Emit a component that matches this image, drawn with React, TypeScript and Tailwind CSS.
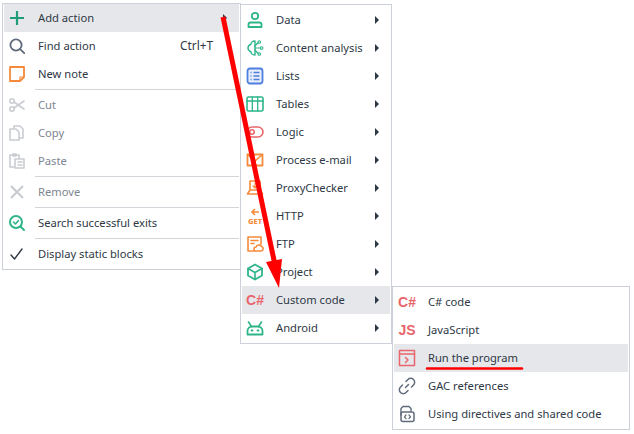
import React from 'react';

const STROKE = { fill: 'none', strokeWidth: 1.6, strokeLinecap: 'round', strokeLinejoin: 'round' } as const;

function Ic({ children }: { children: React.ReactNode }) {
  return (
    <svg width="18" height="18" viewBox="0 0 18 18" {...STROKE}>
      {children}
    </svg>
  );
}

const green = '#2fb58a';
const orange = '#f58a3c';
const red = '#e8666b';
const grey = '#5f6b7a';
const pale = '#c9ccd1';

const icons = {
  plus: <Ic><path d="M9 2v14M2 9h14" stroke="#1f9d78" strokeWidth="2.2" strokeLinecap="butt" /></Ic>,
  search: <Ic><circle cx="8" cy="8" r="5.6" stroke={grey} strokeWidth="1.8" /><path d="M12.2 12.2l4 4" stroke={grey} strokeWidth="1.8" /></Ic>,
  note: <Ic><path d="M2 2h14v10l-4 4H2z" stroke={orange} strokeWidth="1.8" /><path d="M12 16v-4h4" stroke={orange} strokeWidth="1.2" /></Ic>,
  cut: <Ic><circle cx="4" cy="5" r="2.2" stroke={pale} /><circle cx="4" cy="13" r="2.2" stroke={pale} /><path d="M6 6l10 7M6 12l10-7" stroke={pale} /></Ic>,
  copy: <Ic><path d="M6 4V2h6l3 3v9h-4" stroke={pale} /><path d="M2 5h6l3 3v8H2z" stroke={pale} /></Ic>,
  paste: <Ic><path d="M6 15H2V3h9v3" stroke={pale} /><path d="M5 2h3v2H5z" stroke={pale} /><path d="M7 7h9v9H7zM10 10h4M10 13h4" stroke={pale} /></Ic>,
  remove: <Ic><path d="M3 3l12 12M15 3L3 15" stroke={pale} strokeWidth="2.2" strokeLinecap="butt" /></Ic>,
  exits: <Ic><circle cx="8" cy="8" r="6" stroke={green} strokeWidth="2" /><path d="M5.5 8l2 2 3-3.5" stroke={green} /><path d="M12.5 12.5l3.5 3.5" stroke={green} strokeWidth="2" /></Ic>,
  check: <Ic><path d="M3 10l3.5 4L14 4" stroke="#333a44" strokeWidth="1.4" /></Ic>,
  data: <Ic><circle cx="9" cy="5" r="3.2" stroke={green} strokeWidth="1.8" /><path d="M2.5 16v-2.5c0-1.2 1-2 2-2h9c1 0 2 .8 2 2V16z" stroke={green} strokeWidth="1.8" /></Ic>,
  content: <Ic><path d="M9 2C6 2 5 4 5 5 3 6 2 8 2 9s1 3 3 4c0 1 1 3 4 3z" stroke={green} strokeWidth="1.4" /><path d="M9 7l3-3.500M9 9h5M9 11l3 3.500" stroke={green} strokeWidth="1.200" /><circle cx="13.300" cy="3" r="1.300" stroke={green} strokeWidth="1.100" /><circle cx="15.600" cy="9" r="1.300" stroke={green} strokeWidth="1.100" /><circle cx="13.300" cy="15" r="1.300" stroke={green} strokeWidth="1.100" /></Ic>,
  lists: <Ic><rect x="1.500" y="1.500" width="15" height="15" rx="2.500" fill="#e6edfb" stroke="#4f7fe0" strokeWidth="1.8" /><path d="M7.500 5.500h6M7.500 9h6M7.500 12.500h6M4.500 5.500h1M4.500 9h1M4.500 12.500h1" stroke="#4f7fe0" strokeWidth="1.500" strokeLinecap="butt" /></Ic>,
  tables: <Ic><rect x="1" y="2" width="16" height="14" rx="1.500" stroke={green} /><path d="M1 6h16M6.300 2v14M11.700 2v14" stroke={green} strokeWidth="1.300" /></Ic>,
  logic: <Ic><rect x="1" y="4" width="16" height="10" rx="5" stroke={red} /><circle cx="6" cy="9" r="2.200" stroke={red} /></Ic>,
  mail: <Ic><path d="M1.500 3.500h15v11h-15z" stroke={orange} strokeWidth="1.800" /><path d="M1.500 3.500L9 10l7.500-6.500" stroke={orange} /></Ic>,
  proxy: <Ic><path d="M4 2h10v9H4zM1.500 15l2.500-4h10l2.500 4z" stroke={orange} /><path d="M9 4v4M7 7l2 2 2-2" stroke={orange} strokeWidth="1.200" /></Ic>,
  http: (
    <svg width="18" height="18" viewBox="0 0 18 18" fill="none">
      <path d="M13 5H6M9 2L6 5l3 3" stroke={orange} strokeWidth="1.600" />
      <text x="9" y="16.500" textAnchor="middle" fontSize="7.500" fontWeight="800" fill={orange} fontFamily="'Noto Sans', sans-serif">GET</text>
    </svg>
  ),
  ftp: <Ic><path d="M8 16H2V2h13v7" stroke={orange} /><path d="M5 5.500h7M5 8.500h3" stroke={orange} /><path d="M10 16a2 2 0 0 1 0-4 3 3 0 0 1 5.500-.5A2.300 2.300 0 0 1 15 16z" stroke={orange} /></Ic>,
  project: <Ic><path d="M9 1.500l7 4v7l-7 4-7-4v-7z" stroke={green} strokeWidth="1.800" /><path d="M2 5.500l7 4 7-4M9 9.500v7" stroke={green} /></Ic>,
  android: <Ic><path d="M1.500 15.500V12c0-2.500 2-4.500 4.500-4.500h6c2.500 0 4.500 2 4.500 4.500v3.500z" stroke={green} strokeWidth="1.800" /><path d="M2.500 3l3 4.500M15.500 3l-3 4.500" stroke={green} /><path d="M5.500 11.500h1M11.500 11.500h1" stroke={green} strokeWidth="1.800" /></Ic>,
  run: <Ic><rect x="1.500" y="1.500" width="15" height="15" stroke={red} strokeWidth="1.500" /><path d="M1.500 5h15" stroke={red} strokeWidth="1.500" /><path d="M7.500 8.500l2.500 2.500-2.500 2.500" stroke={red} strokeWidth="1.500" /></Ic>,
  link: <Ic><path d="M7.500 10.500l3-3M8 4.500l2-2a3.200 3.200 0 0 1 5.500 5.500l-2 2M10 13.500l-2 2A3.200 3.200 0 0 1 2.500 10l2-2" stroke={grey} strokeWidth="1.500" /></Ic>,
  directives: <Ic><path d="M3 10V3.500L5 1.500h6l2 2V6" stroke={grey} strokeWidth="1.400" /><rect x="3" y="7" width="13" height="9.500" rx="2" stroke={grey} strokeWidth="1.500" /><path d="M8 10l-1.500 1.800L8 13.500M11 10l1.500 1.800L11 13.500" stroke={grey} strokeWidth="1.200" /></Ic>,
};

function Glyph({ text }: { text: string }) {
  return <span className="w-[18px] text-center font-['Liberation_Sans',sans-serif] text-[14px] font-bold leading-none text-[#e8666b]">{text}</span>;
}

type ItemProps = {
  icon: React.ReactNode;
  label: string;
  shortcut?: string;
  arrow?: boolean;
  active?: boolean;
  disabled?: boolean;
};

function Item({ icon, label, shortcut, arrow, active, disabled }: ItemProps) {
  return (
    <div className={`flex h-7 items-center pl-[4px] pr-[11px] ${active ? 'bg-[#e6e7eb]' : ''}`}>
      <span className="flex w-[18px] items-center justify-center">{icon}</span>
      <span className={`ml-[12px] flex-1 whitespace-nowrap ${disabled ? 'text-[#7d8591]' : 'text-[#2e3845]'}`}>{label}</span>
      {shortcut && <span className="mr-[15px] text-[11.800px] text-[#2e3845]">{shortcut}</span>}
      {arrow && <span className="h-0 w-0 border-y-[4px] border-l-[4px] border-y-transparent border-l-[#2e3845]" />}
    </div>
  );
}

function Sep() {
  return <div className="my-px ml-[31px] h-px bg-[#d3d5da]" />;
}

function Menu({ className, children }: { className: string; children: React.ReactNode }) {
  return <div className={`border border-[#ccd0d8] bg-white p-px ${className}`}>{children}</div>;
}

export default function App() {
  return (
    <div className="relative flex h-[434px] w-[634px] items-start overflow-hidden bg-white pl-[2px] font-['Noto_Sans',sans-serif] text-[11.2px]">
      <Menu className="mt-[3px] w-[239px] pt-0">
        <div className="relative">
          <Item icon={icons.plus} label="Add action" active />
          <span className="absolute right-[12px] top-[10px] h-0 w-0 border-y-[4px] border-l-[4px] border-y-transparent border-l-[#2e3845]" />
        </div>
        <Item icon={icons.search} label="Find action" shortcut="Ctrl+T" />
        <Item icon={icons.note} label="New note" />
        <Sep />
        <Item icon={icons.cut} label="Cut" disabled />
        <Item icon={icons.copy} label="Copy" disabled />
        <Item icon={icons.paste} label="Paste" disabled />
        <Sep />
        <Item icon={icons.remove} label="Remove" disabled />
        <Sep />
        <Item icon={icons.exits} label="Search successful exits" />
        <Sep />
        <Item icon={icons.check} label="Display static blocks" />
      </Menu>
      <Menu className="z-10 -ml-px mt-[4px] w-[152px]">
        <Item icon={icons.data} label="Data" arrow />
        <Item icon={icons.content} label="Content analysis" arrow />
        <Item icon={icons.lists} label="Lists" arrow />
        <Item icon={icons.tables} label="Tables" arrow />
        <Item icon={icons.logic} label="Logic" arrow />
        <Item icon={icons.mail} label="Process e-mail" arrow />
        <Item icon={icons.proxy} label="ProxyChecker" arrow />
        <Item icon={icons.http} label="HTTP" arrow />
        <Item icon={icons.ftp} label="FTP" arrow />
        <Item icon={icons.project} label="Project" arrow />
        <Item icon={<Glyph text="C#" />} label="Custom code" arrow active />
        <Item icon={icons.android} label="Android" arrow />
      </Menu>
      <Menu className="mt-[286px] w-[238px]">
        <Item icon={<Glyph text="C#" />} label="C# code" />
        <Item icon={<Glyph text="JS" />} label="JavaScript" />
        <Item icon={icons.run} label="Run the program" active />
        <Item icon={icons.link} label="GAC references" />
        <Item icon={icons.directives} label="Using directives and shared code" />
      </Menu>
      {/* red annotation arrow and underline */}
      <svg className="absolute left-0 top-0 z-20" width="634" height="434" fill="none">
        <path d="M223 17L275 265" stroke="#ff0000" strokeWidth="5" />
        <path d="M266 262L282 259L279 288z" fill="#ff0000" />
        <path d="M427 368.500H522" stroke="#ff0000" strokeWidth="2.500" strokeLinecap="round" />
      </svg>
    </div>
  );
}
